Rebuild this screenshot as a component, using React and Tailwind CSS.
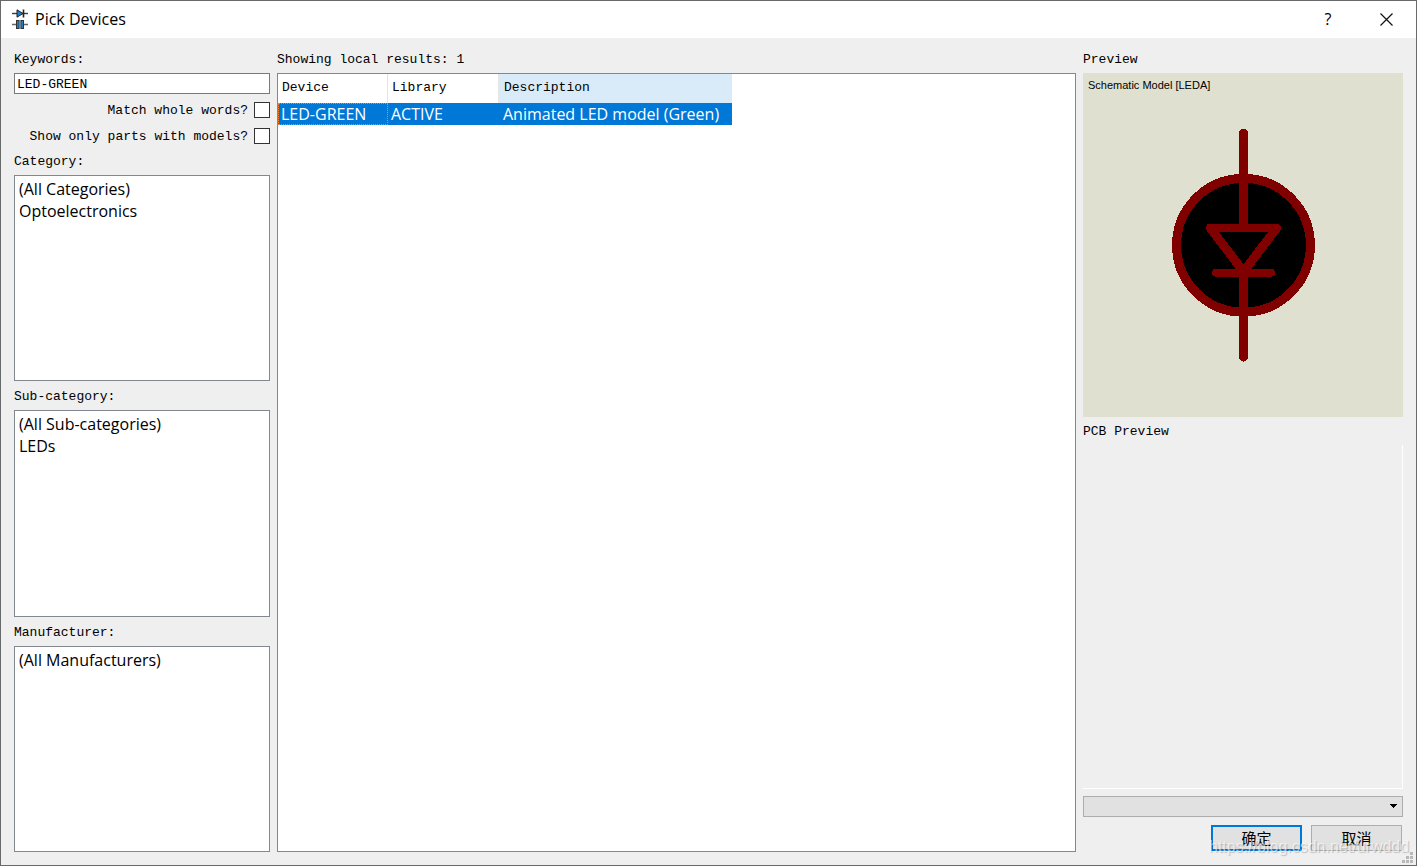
import React from "react";

const mono = "font-['Liberation_Mono','Noto_Sans_CJK_SC',monospace] text-[13px]";
const sans = "font-['Open_Sans','Noto_Sans_CJK_SC',sans-serif] text-[16px]";
const button = "font-['Noto_Sans_CJK_SC',sans-serif] text-[15px] h-[26px] w-[91px] bg-[#e1e1e1] leading-5";

function DevicesIcon() {
  return (
    <svg width="16" height="20" viewBox="0 0 16 20" aria-hidden="true">
      <path d="M0 4.5H16" stroke="#3c3c3c" strokeWidth="1.4" />
      <path d="M0 15.5H5M11 15.5H16" stroke="#666" strokeWidth="1.4" />
      <path d="M5 0.8V8.2L11 4.5Z" fill="#1583d6" stroke="#222" strokeWidth="1" />
      <path d="M11.5 0.5V8.5" stroke="#222" strokeWidth="1.6" />
      <rect x="4.5" y="11.5" width="2.6" height="8" fill="#1583d6" stroke="#333" strokeWidth="1" />
      <rect x="8.9" y="11.5" width="2.6" height="8" fill="#1583d6" stroke="#333" strokeWidth="1" />
    </svg>
  );
}

function TitleBar() {
  return (
    <header className="flex h-[37px] shrink-0 items-center bg-white pb-px pl-[11px]">
      <DevicesIcon />
      <h1 className={`${sans} ml-[7px] flex-1 leading-5`}>Pick Devices</h1>
      <button aria-label="Help" className={`${sans} h-full w-14 leading-5`}>?</button>
      <button aria-label="Close" className="flex h-full w-[60px] items-center justify-center">
        <svg width="13" height="13" viewBox="0 0 13 13" aria-hidden="true">
          <path d="M0.5 0.5L12.5 12.5M12.5 0.5L0.5 12.5" stroke="#111" strokeWidth="1.2" />
        </svg>
      </button>
    </header>
  );
}

function Caption({ htmlFor, children }) {
  const Tag = htmlFor ? "label" : "h2";
  return (
    <Tag htmlFor={htmlFor} className={`${mono} mb-0.5 block h-[22px] shrink-0 leading-[22px]`}>
      {children}
    </Tag>
  );
}

function CheckRow({ id, children }) {
  return (
    <div className="flex h-[26px] shrink-0 items-start justify-end gap-1.5 pt-1">
      <label htmlFor={id} className={`${mono} leading-[18px]`}>{children}</label>
      <input id={id} type="checkbox" className="size-4 appearance-none border border-[#333] bg-white checked:bg-[#0078d7]" />
    </div>
  );
}

function ListBox({ id, label, items }) {
  return (
    <div className="flex min-h-0 flex-1 flex-col">
      <Caption htmlFor={id}>{label}</Caption>
      <select id={id} size={4} className={`${sans} min-h-0 w-full flex-1 overflow-auto border border-[#828790] bg-white pt-0.5 pl-1 text-black`}>
        {items.map((item) => (
          <option key={item} className="h-[22px] p-0 leading-[22px]">{item}</option>
        ))}
      </select>
    </div>
  );
}

function SearchPanel() {
  return (
    <section className="flex w-64 shrink-0 flex-col">
      <Caption htmlFor="keywords">Keywords:</Caption>
      <input
        id="keywords"
        type="text"
        defaultValue="LED-GREEN"
        className={`${mono} mb-1 h-[21px] w-full shrink-0 border border-[#7a7a7a] bg-white px-0.5 pt-0.5`}
      />
      <CheckRow id="whole">Match whole words?</CheckRow>
      <CheckRow id="models">Show only parts with models?</CheckRow>
      <div className="flex min-h-0 flex-1 flex-col gap-[5px] pt-px">
        <ListBox id="category" label="Category:" items={["(All Categories)", "Optoelectronics"]} />
        <ListBox id="subcategory" label="Sub-category:" items={["(All Sub-categories)", "LEDs"]} />
        <ListBox id="manufacturer" label="Manufacturer:" items={["(All Manufacturers)"]} />
      </div>
    </section>
  );
}

function ResultsPanel() {
  return (
    <section className="flex min-w-0 flex-1 flex-col">
      <Caption>Showing local results: 1</Caption>
      <div className="min-h-0 flex-1 overflow-auto border border-[#828790] bg-white">
        <table className="table-fixed border-separate border-spacing-0 text-left">
          <colgroup>
            <col className="w-[110px]" />
            <col className="w-[111px]" />
            <col className="w-[233px]" />
          </colgroup>
          <thead>
            <tr className={`${mono} h-[29px] leading-[22px]`}>
              <th className="border-r border-[#e5e5e5] p-0 pb-0.5 pl-1 font-normal">Device</th>
              <th className="border-r border-[#e5e5e5] p-0 pb-0.5 pl-1 font-normal">Library</th>
              <th className="bg-[#d9ebf9] p-0 pb-0.5 pl-[5px] font-normal">Description</th>
            </tr>
          </thead>
          <tbody>
            <tr className={`${sans} h-[22px] bg-[#0078d7] leading-[22px] text-white`}>
              <td className="p-0 pl-[3px] outline outline-1 -outline-offset-1 outline-dotted outline-[#ff8728]">LED-GREEN</td>
              <td className="p-0 pl-[3px]">ACTIVE</td>
              <td className="p-0 pl-1">Animated LED model (Green)</td>
            </tr>
          </tbody>
        </table>
      </div>
    </section>
  );
}

function LedSymbol() {
  return (
    <svg className="absolute inset-0 h-full w-full" viewBox="0 0 320 344" role="img" aria-label="LED symbol" shapeRendering="crispEdges">
      <circle cx="160.5" cy="172.5" r="67" fill="#000" stroke="#800000" strokeWidth="9" />
      <g fill="none" stroke="#800000" strokeLinecap="round" strokeLinejoin="round">
        <path d="M160.5 60.5V155M160.5 200V284.5M127.5 155.5L160.5 199L193.5 155.5" strokeWidth="9" />
        <path d="M127 155H194M133 200H188" strokeWidth="8" />
      </g>
    </svg>
  );
}

function PreviewPanel() {
  return (
    <section className="flex w-80 shrink-0 flex-col">
      <Caption>Preview</Caption>
      <div className="relative mb-1 min-h-0 flex-1 bg-[#dfe0d0]">
        <LedSymbol />
        <p className="relative pt-1 pl-[5px] font-['Liberation_Sans',sans-serif] text-[11px] leading-4">
          Schematic Model [LEDA]
        </p>
      </div>
      <Caption>PCB Preview</Caption>
      <div className="mb-[7px] min-h-0 flex-1 border-r border-b border-white" />
      <div className="relative mb-2 h-[21px] shrink-0">
        <select aria-label="Package" className="h-full w-full appearance-none border border-[#adadad] bg-[#e1e1e1]" />
        <svg className="pointer-events-none absolute top-2 right-1.5" width="7" height="4" viewBox="0 0 7 4" aria-hidden="true" shapeRendering="crispEdges">
          <path d="M0 0H7V1H6V2H5V3H4V4H3V3H2V2H1V1H0Z" fill="#000" />
        </svg>
      </div>
      <div className="relative mb-px flex shrink-0 justify-end gap-[9px] pr-px">
        <button className={`${button} border-2 border-[#0078d7]`}>确定</button>
        <button className={`${button} border border-[#adadad]`}>取消</button>
        <span className="pointer-events-none absolute top-[11px] left-[126px] font-['Liberation_Sans',sans-serif] text-[16px] leading-[22px] whitespace-nowrap text-white/60 [text-shadow:1px_1px_1px_rgba(0,0,0,0.2)]">
          https://blog.csdn.net/urwddd
        </span>
      </div>
    </section>
  );
}

function SizeGrip() {
  return (
    <svg className="absolute right-[3px] bottom-[2px]" width="11" height="11" viewBox="0 0 11 11" fill="#b8b8b8" aria-hidden="true" shapeRendering="crispEdges">
      <path d="M8 0h3v3H8zM4 4h3v3H4zM8 4h3v3H8zM0 8h3v3H0zM4 8h3v3H4zM8 8h3v3H8z" />
    </svg>
  );
}

export default function App() {
  return (
    <div className="relative flex h-screen flex-col border border-[#68696b] bg-[#efefef] text-black">
      <TitleBar />
      <main className="flex min-h-0 flex-1 gap-[7px] px-[13px] pt-[11px] pb-[13px]">
        <SearchPanel />
        <ResultsPanel />
        <PreviewPanel />
      </main>
      <SizeGrip />
    </div>
  );
}
